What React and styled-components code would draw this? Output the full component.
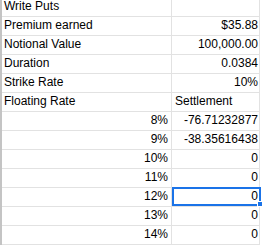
import React from "react";
import styled, { createGlobalStyle } from "styled-components";

const GlobalStyle = createGlobalStyle`
  html, body {
    margin: 0;
    padding: 0;
    background: #fff;
    overflow: hidden;
  }
  body {
    font-family: "Liberation Sans", Arial, sans-serif;
  }
`;

const Sheet = styled.div`
  width: 262px;
  height: 245px;
  overflow: hidden;
  background: #fff;
`;

const Grid = styled.div`
  display: grid;
  grid-template-columns: 170px 88px;
  grid-auto-rows: 19px;
  grid-template-rows: 17px;
  border-left: 2px solid #c4c4c4;
  width: 258px;
  box-sizing: border-box;
`;

const Cell = styled.div`
  position: relative;
  box-sizing: border-box;
  border-right: 1px solid #e2e2e2;
  border-bottom: 1px solid #e2e2e2;
  display: flex;
  align-items: flex-end;
  justify-content: ${(p) => (p.$right ? "flex-end" : "flex-start")};
  padding: 0 ${(p) => (p.$right ? "3px" : "0")} 4px ${(p) => (p.$right ? "0" : "2px")};
  font-size: 12px;
  line-height: 12px;
  color: #000;
  white-space: nowrap;
`;

const ValueCell = styled(Cell)`
  padding-right: 1px;
  padding-left: 3px;
`;

const Selection = styled.div`
  position: absolute;
  left: 0;
  top: -1px;
  width: 89px;
  height: 19px;
  box-sizing: border-box;
  border: 2px solid #1a73e8;
  pointer-events: none;
`;

const Handle = styled.div`
  position: absolute;
  right: -4px;
  bottom: -3px;
  width: 6px;
  height: 6px;
  box-sizing: border-box;
  background: #1a73e8;
  border: 1px solid #fff;
`;

const rows = [
  { label: "Write Puts", value: "" },
  { label: "Premium earned", value: "$35.88" },
  { label: "Notional Value", value: "100,000.00" },
  { label: "Duration", value: "0.0384" },
  { label: "Strike Rate", value: "10%" },
  { label: "Floating Rate", value: "Settlement", left: true },
  { rate: "8%", value: "-76.71232877" },
  { rate: "9%", value: "-38.35616438" },
  { rate: "10%", value: "0" },
  { rate: "11%", value: "0" },
  { rate: "12%", value: "0", selected: true },
  { rate: "13%", value: "0" },
  { rate: "14%", value: "0" },
];

export default function App() {
  return (
    <Sheet>
      <GlobalStyle />
      <Grid>
        {rows.map((r, i) => (
          <React.Fragment key={i}>
            {r.rate ? <Cell $right>{r.rate}</Cell> : <Cell>{r.label}</Cell>}
            <ValueCell $right={!r.left}>
              {r.value}
              {r.selected && (
                <Selection>
                  <Handle />
                </Selection>
              )}
            </ValueCell>
          </React.Fragment>
        ))}
      </Grid>
    </Sheet>
  );
}
